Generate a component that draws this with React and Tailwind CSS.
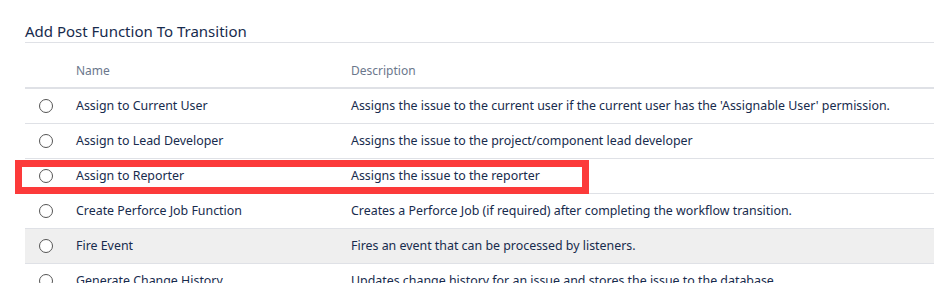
import React, { useState } from "react";

const functions = [
  { name: "Assign to Current User", desc: "Assigns the issue to the current user if the current user has the 'Assignable User' permission." },
  { name: "Assign to Lead Developer", desc: "Assigns the issue to the project/component lead developer" },
  { name: "Assign to Reporter", desc: "Assigns the issue to the reporter", marked: true },
  { name: "Create Perforce Job Function", desc: "Creates a Perforce Job (if required) after completing the workflow transition." },
  { name: "Fire Event", desc: "Fires an event that can be processed by listeners.", hover: true },
  { name: "Generate Change History", desc: "Updates change history for an issue and stores the issue to the database." },
];

const Radio = () => (
  <span className="block w-[14px] h-[14px] rounded-full border border-[#555] bg-white" />
);

export default function App() {
  const [selected] = useState(null);

  return (
    <div
      className="w-[934px] h-[283px] overflow-hidden bg-white pl-[25px] pt-[21px] text-[#172b4d]"
      style={{ fontFamily: '"Noto Sans", "Open Sans", sans-serif' }}
    >
      {/* Heading */}
      <h2 className="text-[15px] leading-[21px] border-b border-[#dfe1e6]">
        Add Post Function To Transition
      </h2>

      {/* Table */}
      <div className="relative">
        <div className="grid grid-cols-[51px_275px_1fr] h-[46px] items-end pb-[7px] border-b-2 border-[#dfe1e6] text-[12px] text-[#6b778c]">
          <span />
          <span>Name</span>
          <span>Description</span>
        </div>

        {functions.map((f) => (
          <div
            key={f.name}
            className={`relative grid grid-cols-[51px_275px_1fr] h-[35px] items-center border-b border-[#dfe1e6] text-[12.4px] ${
              f.hover ? "bg-[#efefef]" : ""
            }`}
          >
            <span className="flex pl-[14px]">
              <Radio checked={selected === f.name} />
            </span>
            <span className="whitespace-nowrap">{f.name}</span>
            <span className="whitespace-nowrap">{f.desc}</span>
            {f.marked && (
              <div className="absolute left-[-10px] top-[1px] w-[574px] h-[34px] border-[7px] border-[#fc3a3a] pointer-events-none" />
            )}
          </div>
        ))}
      </div>
    </div>
  );
}
